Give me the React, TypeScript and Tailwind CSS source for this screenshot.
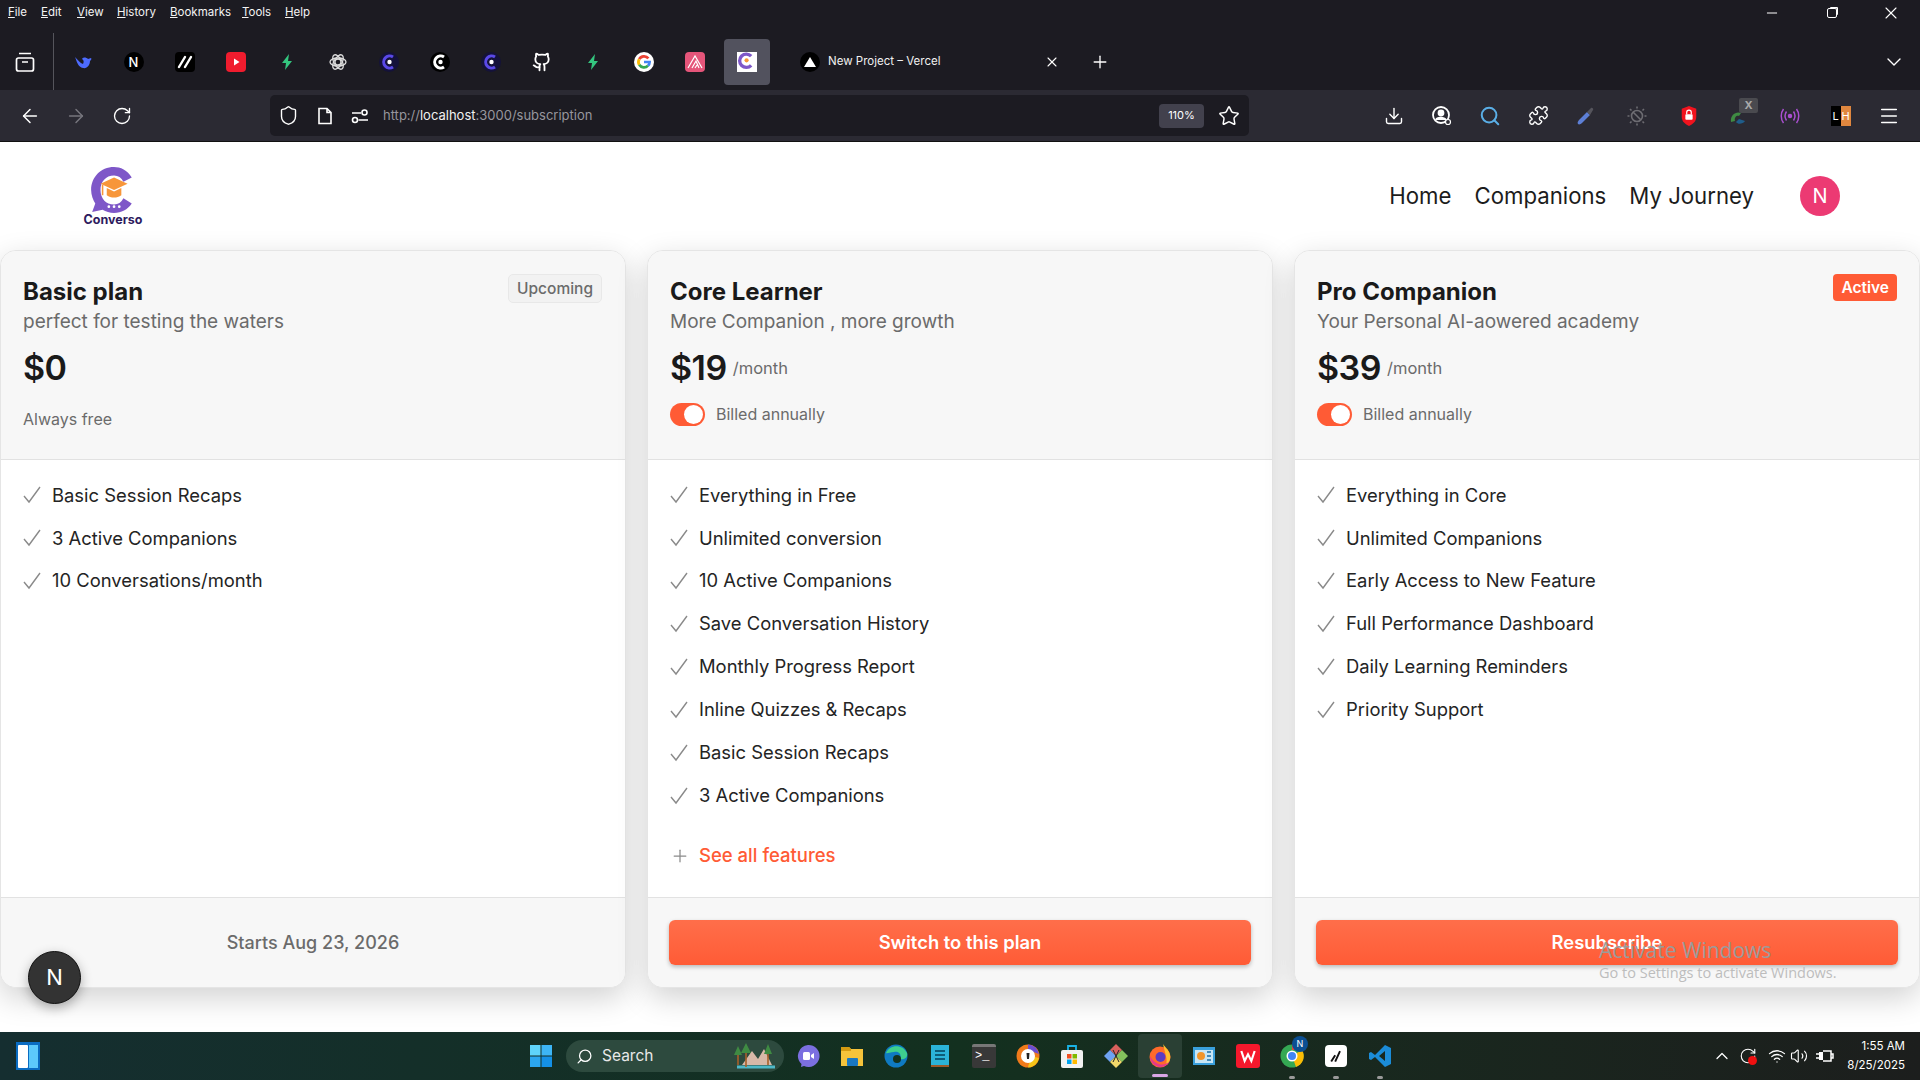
import {
  ArrowLeft,
  ArrowRight,
  ChevronDown,
  ChevronUp,
  Download,
  Github,
  Menu,
  Minus,
  Plus,
  Puzzle,
  RotateCw,
  Search,
  Shield,
  Star,
  Volume2,
  Wifi,
  X,
} from "lucide-react";
import type { ReactNode } from "react";

const menuItems = [
  ["F", "ile", "w-[33px]"],
  ["E", "dit", "w-[36px]"],
  ["V", "iew", "w-[40px]"],
  ["H", "istory", "w-[53px]"],
  ["B", "ookmarks", "w-[72px]"],
  ["T", "ools", "w-[43px]"],
  ["H", "elp", "w-[30px]"],
];

function Tile({ bg, children }: { bg: string; children?: ReactNode }) {
  return (
    <div className={`size-5 rounded-[4px] flex items-center justify-center overflow-hidden ${bg}`}>
      {children}
    </div>
  );
}

function Bolt() {
  return (
    <svg viewBox="0 0 20 20" className="size-5">
      <path d="M12 2 5 11h4l-1 7 7-9h-4z" fill="#34c67f" />
    </svg>
  );
}

function CRound({ bg, ring }: { bg: string; ring: string }) {
  return (
    <div className={`size-5 rounded-full flex items-center justify-center ${bg}`}>
      <svg viewBox="0 0 20 20" className="size-5">
        <path d="M14 5a6 6 0 1 0 0 10" fill="none" stroke={ring} strokeWidth="3" />
        <circle cx="10.5" cy="10" r="2.2" fill="#fff" />
      </svg>
    </div>
  );
}

function LogoSmall() {
  return (
    <svg viewBox="0 0 24 24" className="size-5">
      <rect width="24" height="24" fill="#fff" />
      <path d="M17 5a8 8 0 1 0 0 11" fill="none" stroke="#7e57c8" strokeWidth="4" />
      <circle cx="11.5" cy="10" r="2.5" fill="#f7963a" />
    </svg>
  );
}

const favicons: ReactNode[] = [
  <svg key="ds" viewBox="0 0 20 20" className="size-5">
    <path d="M2 5c2 5 3 10 8 11 4 1 7-3 7-7 1-1 2-2 1-3-1 0-2 1-3 1-2-2-5-2-6 0 2 1 2 3 1 5-3-1-5-4-8-7z" fill="#4d6bfe" />
  </svg>,
  <div key="n" className="size-5 rounded-full bg-black text-white text-[13px] leading-5 text-center font-medium">N</div>,
  <Tile key="w" bg="bg-black">
    <svg viewBox="0 0 20 20" className="size-5">
      <path d="M4 15 10 5M10 15l6-10" stroke="#fff" strokeWidth="2.4" strokeLinecap="round" />
    </svg>
  </Tile>,
  <Tile key="yt" bg="bg-[#f01c2e]">
    <svg viewBox="0 0 20 20" className="size-5">
      <path d="M8 6.5v7l5.5-3.5z" fill="#fff" />
    </svg>
  </Tile>,
  <Bolt key="b1" />,
  <svg key="gpt" viewBox="0 0 20 20" className="size-5" fill="none" stroke="#ddd" strokeWidth="1.3">
    <circle cx="10" cy="10" r="3" />
    <ellipse cx="10" cy="10" rx="8" ry="4" />
    <ellipse cx="10" cy="10" rx="8" ry="4" transform="rotate(60 10 10)" />
    <ellipse cx="10" cy="10" rx="8" ry="4" transform="rotate(120 10 10)" />
  </svg>,
  <CRound key="c1" bg="bg-[#14123a]" ring="#5a49e8" />,
  <CRound key="c2" bg="bg-black" ring="#ffffff" />,
  <CRound key="c3" bg="bg-[#14123a]" ring="#5a49e8" />,
  <Github key="gh" className="size-5 text-white" strokeWidth={2.2} />,
  <Bolt key="b2" />,
  <div key="g" className="size-5 rounded-full bg-white flex items-center justify-center">
    <svg viewBox="0 0 20 20" className="size-4" fill="none" strokeWidth="3.4">
      <path d="M15.5 5.5A7 7 0 0 0 4 6.5" stroke="#ea4335" />
      <path d="M4 6.5a7 7 0 0 0 0 7" stroke="#fbbc05" />
      <path d="M4 13.500a7 7 0 0 0 11 1" stroke="#34a853" />
      <path d="M15 14.500c1.500-1.300 2-2.800 2-4.500h-7" stroke="#4285f4" />
    </svg>
  </div>,
  <Tile key="s" bg="bg-[#e5557a]">
    <svg viewBox="0 0 20 20" className="size-5" fill="none" stroke="#fff" strokeWidth="1.2">
      <path d="M3 16 10 4l7 12M7 16l4-7 3 7M10 16l2-3" />
    </svg>
  </Tile>,
];

function TitleBar() {
  return (
    <div className="h-[90px] bg-[#1c1b22] text-white relative shrink-0 flex flex-col">
      <div className="flex items-center h-[33px] pb-2 pl-[8px]">
        {menuItems.map(([first, rest, width], i) => (
          <span key={i} className={`${width} text-[11.5px] text-[#f4f4f4]`}>
            <span className="underline">{first}</span>
            {rest}
          </span>
        ))}
        <div className="ml-auto -mr-[2px] flex items-center">
          <div className="w-[60px] flex justify-center">
            <Minus className="size-4" strokeWidth={1.5} />
          </div>
          <div className="w-[60px] flex justify-center">
            <div className="size-[10px] border border-white rounded-[2px] shadow-[2px_-2px_0_-1px_#fff]" />
          </div>
          <div className="w-[60px] flex justify-center pr-[2px]">
            <X className="size-5" strokeWidth={1.3} />
          </div>
        </div>
      </div>
      <div className="flex items-center flex-1">
        <div className="w-[54px] self-stretch flex items-center justify-center border-r border-[#55555c]">
          <svg viewBox="0 0 24 24" className="size-6 -ml-[3px]" fill="none" stroke="#fff" strokeWidth="1.7">
            <rect x="3.500" y="8" width="17" height="13" rx="2" />
            <path d="M6 3.500h12M9 12h6" />
          </svg>
        </div>
        <div className="flex items-center pl-[3px]">
          {favicons.map((icon, i) => (
            <div key={i} className="w-[51px] flex items-center justify-center">
              {icon}
            </div>
          ))}
          <div className="w-[46px] h-[46px] ml-[4px] rounded-[4px] bg-[#52525e] flex items-center justify-center">
            <LogoSmall />
          </div>
        </div>
        <div className="w-[268px] ml-[30px] flex items-center">
          <div className="size-5 rounded-full bg-black flex items-center justify-center">
            <div className="w-0 h-0 border-x-[6px] border-x-transparent border-b-[10px] border-b-white" />
          </div>
          <span className="ml-[8px] text-[11.5px] text-[#f0f0f0]">New Project – Vercel</span>
          <X className="size-4 ml-auto mr-[8px]" strokeWidth={1.6} />
        </div>
        <Plus className="size-5 ml-[22px]" strokeWidth={1.6} />
        <ChevronDown className="size-6 ml-auto mr-[14px]" strokeWidth={1.4} />
      </div>
    </div>
  );
}

function ToolSlot({ children }: { children: ReactNode }) {
  return <div className="w-[48px] flex items-center justify-center relative">{children}</div>;
}

function ToolBar() {
  return (
    <div className="h-[52px] bg-[#2b2a33] text-white flex items-center shrink-0 pl-[7px] border-b border-[#111]">
      <div className="w-[46px] flex justify-center">
        <ArrowLeft className="size-[22px]" strokeWidth={1.6} />
      </div>
      <div className="w-[46px] flex justify-center">
        <ArrowRight className="size-[22px] text-[#77767e]" strokeWidth={1.6} />
      </div>
      <div className="w-[46px] flex justify-center">
        <RotateCw className="size-5" strokeWidth={1.6} />
      </div>
      <div className="ml-[125px] w-[979px] h-[41px] rounded-[5px] bg-[#1c1b22] flex items-center pl-[8px]">
        <Shield className="size-[21px]" strokeWidth={1.6} />
        <svg viewBox="0 0 20 20" className="size-5 ml-[16px]" fill="none" stroke="#fff" strokeWidth="1.6">
          <path d="M4 2.500h8l4 4v11H4zM12 2.500v4h4" />
        </svg>
        <svg viewBox="0 0 20 20" className="size-5 ml-[15px]" fill="none" stroke="#fff" strokeWidth="1.6">
          <circle cx="14.500" cy="6.500" r="2.500" />
          <circle cx="5" cy="14" r="2.500" />
          <path d="M2 7h9M8.500 14H18" />
        </svg>
        <span className="ml-[13px] text-[13px] text-[#97969d]">
          http://<span className="text-[#f0f0f0]">localhost</span>:3000/subscription
        </span>
        <div className="ml-auto w-[45px] h-[24px] rounded-[4px] bg-[#42414d] text-[11px] flex items-center justify-center">
          110%
        </div>
        <Star className="size-[22px] ml-[14px] mr-[9px]" strokeWidth={1.6} />
      </div>
      <div className="ml-[121px] flex items-center">
        <ToolSlot>
          <Download className="size-5" strokeWidth={1.7} />
        </ToolSlot>
        <ToolSlot>
          <svg viewBox="0 0 22 22" className="size-[22px]" fill="none" stroke="#fff" strokeWidth="1.8">
            <circle cx="10" cy="10" r="8" />
            <circle cx="10" cy="8" r="2.500" fill="#fff" />
            <path d="M5 15c1-3 8-3 10 0" fill="#fff" />
            <circle cx="17" cy="17" r="2.500" fill="#2b2a33" strokeWidth="1.200" />
          </svg>
        </ToolSlot>
        <ToolSlot>
          <Search className="size-[22px] text-[#5aaee6]" strokeWidth={2.2} />
        </ToolSlot>
        <ToolSlot>
          <Puzzle className="size-[21px]" strokeWidth={1.6} />
        </ToolSlot>
        <ToolSlot>
          <svg viewBox="0 0 22 22" className="size-[22px]">
            <path d="M3 19c-1-1 0-3 1-4l8-8 3 3-8 8c-1 1-3 2-4 1z" fill="#5d7fd6" />
            <path d="M12 7l4-4c1-1 3 1 2 2l-3 5z" fill="#55545c" />
          </svg>
        </ToolSlot>
        <div className="w-[53px] flex justify-center">
          <svg viewBox="0 0 22 22" className="size-[22px]" fill="none" stroke="#6d6c72" strokeWidth="1.600">
            <circle cx="11" cy="11" r="5.500" />
            <path d="M7 7l8 8M11 1.500v2M11 18.500v2M1.500 11h2M18.500 11h2M4 4l1.500 1.500M16.500 16.500 18 18M18 4l-1.500 1.500M4 18l1.500-1.500" />
          </svg>
        </div>
        <div className="w-[51px] flex justify-center">
          <svg viewBox="0 0 22 24" className="w-[20px] h-[24px]">
            <path d="M11 1l8 3v9c0 5-4 8-8 10-4-2-8-5-8-10V4z" fill="#f0131e" />
            <rect x="7" y="10" width="8" height="6" rx="1" fill="#fff" />
            <path d="M8.500 10V8a2.500 2.500 0 0 1 5 0v2" fill="none" stroke="#fff" strokeWidth="1.300" />
          </svg>
        </div>
        <div className="w-[50px] flex justify-center relative">
          <svg viewBox="0 0 22 22" className="size-[22px]">
            <path d="M3 17C2 10 8 6 13 8l-2 3c-2-1-5 1-4 5z" fill="#3f8b43" />
            <path d="M8 17c2 3 7 2 9-1l-6-2z" fill="#1f5d8b" />
          </svg>
          <span className="absolute -top-[7px] left-[25px] w-[19px] h-[15px] rounded-[2px] bg-[#4a4a4f] text-[#aaa] text-[11px] leading-[15px] text-center font-bold">
            X
          </span>
        </div>
        <div className="w-[51px] flex justify-center">
          <svg viewBox="0 0 22 22" className="size-[22px]" fill="none" stroke="#a94fcf" strokeWidth="1.500">
            <circle cx="11" cy="11" r="1.500" fill="#a94fcf" />
            <path d="M7.500 6.500c-2 3-2 6 0 9M14.500 6.500c2 3 2 6 0 9M4.500 4c-3 4-3 10 0 14M17.500 4c3 4 3 10 0 14" />
          </svg>
        </div>
        <div className="w-[51px] flex justify-center">
          <div className="w-[20px] h-[20px] flex text-[11px] leading-5 text-center">
            <span className="w-[10px] bg-black">L</span>
            <span className="w-[10px] bg-[#e0873f]">H</span>
          </div>
        </div>
        <div className="w-[46px] flex justify-center">
          <Menu className="size-[22px]" strokeWidth={1.6} />
        </div>
      </div>
    </div>
  );
}

function Logo() {
  return (
    <div className="w-[60px] flex flex-col items-center">
      <svg viewBox="0 0 48 48" className="size-[50px] -mt-[1px] -mb-[2px]">
        <path
          d="M42 12C38 5 31 2 25 2 12 2 3 12 3 24c0 5 2 10 4 13l-3 8 10-2c3 2 7 3 11 3 7 0 13-3 17-9l-8-5c-2 4-5 6-9 6-8 0-13-6-13-14S17 10 25 10c4 0 7 2 9 6z"
          fill="#7e57c8"
        />
        <path d="M25 12 38 18 25 24 12 18z" fill="#f7963a" />
        <path d="M18 22v7c4 3 10 3 14 0v-7l-7 3.500z" fill="#f7963a" />
        <path d="M14 19v10" stroke="#f7963a" strokeWidth="1.500" />
        <circle cx="20" cy="40" r="1.300" fill="#fff" />
        <circle cx="25" cy="40" r="1.300" fill="#fff" />
        <circle cx="30" cy="40" r="1.300" fill="#fff" />
      </svg>
      <span className="text-[12.500px] leading-[14px] font-bold text-[#2d1b5e]">Converso</span>
    </div>
  );
}

function Navbar() {
  return (
    <div className="h-[108px] flex items-center pl-[83px] pr-[80px] shrink-0">
      <Logo />
      <div className="ml-auto flex items-center gap-[23px] text-[22.200px] text-[#1c1c1c]">
        <span>Home</span>
        <span>Companions</span>
        <span>My Journey</span>
        <div className="ml-[23px] size-10 rounded-full bg-[#ec3a73] text-white flex items-center justify-center text-[20px]">
          N
        </div>
      </div>
    </div>
  );
}

type PlanProps = {
  name: string;
  tagline: string;
  price: string;
  badge: ReactNode;
  billed: boolean;
  features: string[];
  more?: boolean;
  footer: ReactNode;
};

function PlanCard({ name, tagline, price, badge, billed, features, more, footer }: PlanProps) {
  return (
    <div className="relative flex flex-col bg-white rounded-[16px] border border-[#e5e5e5] overflow-hidden shadow-[0_10px_30px_rgba(0,0,0,0.18)]">
      <div className="h-[209px] shrink-0 bg-[#f7f7f7] border-b border-[#e2e2e2] px-[22px] pt-[26px] relative">
        <div className="text-[24px] leading-[30px] font-bold text-[#1a1a1a]">{name}</div>
        <div className="text-[19px] leading-[28px] text-[#6b6b6b] mt-[1px]">{tagline}</div>
        <div className="flex items-center mt-[10px] h-[44px]">
          <span className="text-[34px] leading-[44px] font-semibold text-[#1a1a1a] tracking-[-0.5px]">{price}</span>
          {billed && <span className="ml-[6px] mt-[1px] text-[16.500px] text-[#6b6b6b]">/month</span>}
        </div>
        <div className="flex items-center h-[24px] mt-[12px]">
          {billed ? (
            <>
              <div className="w-[35px] h-[23px] rounded-full bg-[#ff5b35] flex items-center justify-end pr-[2px]">
                <div className="size-[19px] rounded-full bg-white" />
              </div>
              <span className="ml-[11px] text-[16px] text-[#6b6b6b]">Billed annually</span>
            </>
          ) : (
            <span className="text-[16px] text-[#6b6b6b] mt-[10px]">Always free</span>
          )}
        </div>
        {badge}
      </div>
      <div className="flex-1 px-[22px] pt-[14px]">
        {features.map((feature) => (
          <div key={feature} className="flex items-center h-[42.900px] text-[18.400px] text-[#242424]">
            <svg viewBox="0 0 18 18" className="size-[18px] shrink-0" fill="none" stroke="#8a8a8a" strokeWidth="1.400">
              <path d="M1 10l5 6L17 1" />
            </svg>
            <span className="ml-[11px]">{feature}</span>
          </div>
        ))}
        {more && (
          <div className="flex items-center mt-[26px] h-[26px] text-[18.500px] font-medium text-[#ff5b35]">
            <Plus className="size-5 text-[#8a8a8a]" strokeWidth={1.5} />
            <span className="ml-[9px]">See all features</span>
          </div>
        )}
      </div>
      <div className="h-[90px] shrink-0 bg-[#f7f7f7] border-t border-[#e2e2e2] flex items-center px-[21px]">
        {footer}
      </div>
    </div>
  );
}

function PrimaryButton({ children }: { children: ReactNode }) {
  return (
    <div className="w-full h-[45px] rounded-[6px] bg-gradient-to-b from-[#ff6e4a] to-[#ff5b35] text-white text-[18.400px] font-semibold flex items-center justify-center shadow-[0_2px_4px_rgba(0,0,0,0.25)]">
      {children}
    </div>
  );
}

const plans: PlanProps[] = [
  {
    name: "Basic plan",
    tagline: "perfect for testing the waters",
    price: "$0",
    billed: false,
    badge: (
      <span className="absolute top-[23px] right-[23px] h-[29px] px-[8px] rounded-[5px] border border-[#e8e8e8] bg-[#f2f2f2] text-[15.500px] font-medium leading-[27px] text-[#6b6b6b]">
        Upcoming
      </span>
    ),
    features: ["Basic Session Recaps", "3 Active Companions", "10 Conversations/month"],
    footer: <div className="w-full text-center text-[18px] font-medium text-[#6b6b6b]">Starts Aug 23, 2026</div>,
  },
  {
    name: "Core Learner",
    tagline: "More Companion , more growth",
    price: "$19",
    billed: true,
    badge: null,
    features: [
      "Everything in Free",
      "Unlimited conversion",
      "10 Active Companions",
      "Save Conversation History",
      "Monthly Progress Report",
      "Inline Quizzes & Recaps",
      "Basic Session Recaps",
      "3 Active Companions",
    ],
    more: true,
    footer: <PrimaryButton>Switch to this plan</PrimaryButton>,
  },
  {
    name: "Pro Companion",
    tagline: "Your Personal AI-aowered academy",
    price: "$39",
    billed: true,
    badge: (
      <span className="absolute top-[23px] right-[22px] h-[27px] px-[8px] rounded-[4px] bg-[#ff5b35] text-[15.500px] font-semibold leading-[27px] text-white">
        Active
      </span>
    ),
    features: [
      "Everything in Core",
      "Unlimited Companions",
      "Early Access to New Feature",
      "Full Performance Dashboard",
      "Daily Learning Reminders",
      "Priority Support",
    ],
    footer: <PrimaryButton>Resubscribe</PrimaryButton>,
  },
];

const taskbarIcons: ReactNode[] = [
  <svg key="meet" viewBox="0 0 24 24" className="size-6">
    <path d="M12 1a11 11 0 1 1-4 21l-3 1 .5-3A11 11 0 0 1 12 1z" fill="#7b6fe0" />
    <rect x="7" y="8" width="7" height="8" rx="1.500" fill="#fff" />
    <path d="M15 11l3-2v6l-3-2z" fill="#fff" />
  </svg>,
  <svg key="files" viewBox="0 0 24 24" className="size-6">
    <path d="M1 3h8l2 2h12v17H1z" fill="#f5c33b" />
    <path d="M1 3h8l2 2v2H1z" fill="#d59b12" />
    <rect x="7" y="14" width="11" height="8" rx="1" fill="#1a78c2" />
  </svg>,
  <svg key="edge" viewBox="0 0 24 24" className="size-6">
    <circle cx="12" cy="12" r="11.500" fill="#0f7ac2" />
    <path d="M2 9C5 1 18-1 23 9c1 5-3 7-7 6 2-4-1-8-6-7-4 0-7 2-8 1z" fill="#3ecf8e" />
    <circle cx="13" cy="15" r="4" fill="#14331f" />
  </svg>,
  <svg key="notes" viewBox="0 0 24 24" className="size-6">
    <rect x="3" y="1" width="18" height="22" fill="#2bb3d8" />
    <rect x="3" y="21" width="18" height="2" fill="#9c5a2a" />
    <path d="M7 7h10M7 11h10M7 15h10" stroke="#0d5c78" strokeWidth="1.800" />
  </svg>,
  <div key="term" className="w-6 h-[24px] rounded-[2px] bg-[#383838] border-t-[3px] border-[#777] text-white text-[12px] leading-[18px] font-mono pl-[3px]">
    {">_"}
  </div>,
  <svg key="brave" viewBox="0 0 24 24" className="size-6">
    <circle cx="12" cy="12" r="11.500" fill="#f07a1a" />
    <path d="M12 .5A11.500 11.500 0 0 1 23 10L12 6z" fill="#6b4fd0" />
    <path d="M12 23.500A11.500 11.500 0 0 0 23 14l-8-2z" fill="#f5c518" />
    <circle cx="12" cy="12" r="7" fill="#fff" />
    <path d="M10.500 9h3l-.5 6h-2z" fill="#222" />
  </svg>,
  <svg key="store" viewBox="0 0 24 24" className="size-6">
    <path d="M8 6V2h8v4" fill="none" stroke="#19b3e6" strokeWidth="1.800" />
    <rect x="1" y="6" width="22" height="18" rx="2" fill="#f2f2f2" />
    <rect x="7" y="10" width="4.500" height="4.500" fill="#f25022" />
    <rect x="12.500" y="10" width="4.500" height="4.500" fill="#7fba00" />
    <rect x="7" y="15.500" width="4.500" height="4.500" fill="#00a4ef" />
    <rect x="12.500" y="15.500" width="4.500" height="4.500" fill="#ffb900" />
  </svg>,
  <svg key="kite" viewBox="0 0 24 24" className="size-6">
    <path d="M12 0l6 6-6 6-6-6z" fill="#d9605c" />
    <path d="M0 12l6-6 6 6-6 6z" fill="#6ea2f2" />
    <path d="M24 12l-6-6-6 6 6 6z" fill="#83c15d" />
    <path d="M12 24l6-6-6-6-6 6z" fill="#f1d86a" />
    <path d="M9 6l6 12M15 6 9 18" stroke="#222" strokeWidth="1" />
  </svg>,
  <svg key="fx" viewBox="0 0 24 24" className="size-6">
    <circle cx="12" cy="13" r="10.500" fill="#ff6a2b" />
    <path d="M15 0c2 3 6 6 7 11 1 4-1 8-4 10 2-5-1-12-3-21z" fill="#ffbd2e" />
    <path d="M2 12A10.500 10.500 0 0 0 22 17c-4 5-14 6-20-5z" fill="#e5388a" />
    <circle cx="12.500" cy="13" r="5" fill="#5b3bc4" />
  </svg>,
  <svg key="tm" viewBox="0 0 24 24" className="size-6">
    <rect x="1" y="3" width="22" height="18" fill="#3aa0dc" />
    <rect x="3" y="6" width="18" height="13" fill="#c8e6f5" />
    <circle cx="9" cy="12" r="4" fill="#f2952b" />
    <path d="M15 8h4M15 12h4M15 16h4" stroke="#1a6fa8" strokeWidth="1.600" />
  </svg>,
  <div key="wps" className="size-6 rounded-[3px] bg-[#f5182c] flex items-center justify-center">
    <svg viewBox="0 0 24 24" className="size-5" fill="none" stroke="#fff" strokeWidth="2.600">
      <path d="M4 6l4 12 4-8 4 8 4-12" />
    </svg>
  </div>,
  <div key="chrome" className="relative size-6">
    <svg viewBox="0 0 24 24" className="size-6">
      <circle cx="12" cy="12" r="11.500" fill="#34a853" />
      <path d="M12 .5A11.500 11.500 0 0 1 22 6H12z" fill="#ea4335" />
      <path d="M22 6a11.500 11.500 0 0 1-6 17l-4-11z" fill="#fbbc05" />
      <circle cx="12" cy="12" r="5.500" fill="#fff" />
      <circle cx="12" cy="12" r="4" fill="#4285f4" />
    </svg>
    <span className="absolute -top-[8px] left-[12px] size-4 rounded-full bg-[#0b4f92] text-white text-[9px] leading-4 text-center">N</span>
  </div>,
  <div key="app" className="size-[22px] rounded-[4px] bg-white flex items-center justify-center">
    <svg viewBox="0 0 20 20" className="size-4" fill="none" stroke="#111" strokeWidth="2.400">
      <path d="M4 17 9 9M9 17l6-13" />
    </svg>
  </div>,
  <svg key="code" viewBox="0 0 24 24" className="size-6">
    <path d="M17 1 23 4v16l-6 3L7 13l-4 3-2-1V9l2-1 4 3zM17 7l-6 5 6 5z" fill="#1b8cd8" />
  </svg>,
];

function Taskbar() {
  return (
    <div className="h-[48px] shrink-0 flex items-center bg-gradient-to-r from-[#152e30] via-[#13301f] to-[#1c1e1d] text-white">
      <div className="ml-[16px] w-[24px] h-[28px] bg-[#0a6cc2] flex items-center px-[2px] gap-[1px]">
        <div className="w-[10px] h-[23px] bg-white rounded-[1px]" />
        <div className="w-[9px] h-[23px] bg-[#5cc9fb]" />
      </div>
      <svg viewBox="0 0 24 24" className="ml-[489px] size-[24px]">
        <rect x="1" y="1" width="10.500" height="10.500" fill="#5fd4fb" />
        <rect x="12.500" y="1" width="10.500" height="10.500" fill="#3db5f5" />
        <rect x="1" y="12.500" width="10.500" height="10.500" fill="#2ba6ef" />
        <rect x="12.500" y="12.500" width="10.500" height="10.500" fill="#1490e6" />
      </svg>
      <div className="ml-[13px] w-[218px] h-[32px] rounded-full bg-[#2d4a3e] flex items-center pl-[10px] relative">
        <Search className="size-[17px] -scale-x-100" strokeWidth={1.800} />
        <span className="ml-[9px] text-[15.500px] text-[#e8e8e8]">Search</span>
        <svg viewBox="0 0 48 30" className="absolute right-[4px] top-[1px] w-[48px] h-[30px]">
          <path d="M10 24 20 10l6 8 6-10 8 16z" fill="#d8b8a8" />
          <path d="M5 26h38" stroke="#4fb8c8" strokeWidth="3" />
          <path d="M6 24V8M14 26V4M36 24V6" stroke="#a8602a" strokeWidth="1.600" />
          <path d="M6 5 2 14h8zM14 2 9 12h10zM36 3 32 13h8z" fill="#3f8b43" />
        </svg>
      </div>
      <div className="ml-[2px] flex items-center">
        {taskbarIcons.map((icon, i) => (
          <div key={i} className={`w-[44px] h-[44px] flex items-center justify-center relative ${i === 8 ? "rounded-[4px] bg-[#2a4034]" : ""}`}>
            {icon}
            {i === 8 && <div className="absolute bottom-[1px] w-[16px] h-[3px] rounded-full bg-[#d9a6e6]" />}
            {i > 10 && <div className="absolute -bottom-[1px] w-[6px] h-[3px] rounded-full bg-[#9a9a9a]" />}
          </div>
        ))}
      </div>
      <div className="ml-auto flex items-center pr-[15px]">
        <ChevronUp className="size-5" strokeWidth={1.500} />
        <div className="relative ml-[7px] size-[18px]">
          <RotateCw className="size-[18px]" strokeWidth={1.500} />
          <div className="absolute bottom-0 right-0 size-[9px] rounded-full bg-[#f01010]" />
        </div>
        <Wifi className="size-[18px] ml-[11px]" strokeWidth={1.700} />
        <Volume2 className="size-[18px] ml-[4px]" strokeWidth={1.500} />
        <svg viewBox="0 0 20 20" className="size-5 ml-[6px]" fill="none" stroke="#fff" strokeWidth="1.500">
          <path d="M9 5h8v10H9M17 8h2v4h-2M2 8h4M2 12h4" />
          <rect x="5" y="6" width="4" height="8" fill="#fff" stroke="none" />
        </svg>
        <div className="ml-[13px] text-right text-[11.500px] leading-[19px]">
          <div>1:55 AM</div>
          <div>8/25/2025</div>
        </div>
      </div>
    </div>
  );
}

export default function App() {
  return (
    <div className="w-[1920px] h-[1080px] relative overflow-hidden flex flex-col bg-white font-['Inter',sans-serif]">
      <TitleBar />
      <ToolBar />
      <div className="flex-1 flex flex-col min-h-0">
        <Navbar />
        <div className="flex-1 min-h-0 grid grid-cols-3 gap-[21px] pb-[44px]">
          {plans.map((plan) => (
            <PlanCard key={plan.name} {...plan} />
          ))}
        </div>
      </div>
      <Taskbar />
      <div className="absolute left-[28px] top-[951px] size-[53px] rounded-full bg-[#333] border border-[#111] text-white text-[22px] flex items-center justify-center shadow-[0_4px_12px_rgba(0,0,0,0.3)]">
        N
      </div>
      <div className="absolute left-[1599px] top-[936px] font-['Open_Sans',sans-serif] text-[#9b9b9b] pointer-events-none">
        <div className="text-[21px] leading-[28px]">Activate Windows</div>
        <div className="text-[14.500px] leading-[20px] mt-[-1px] text-[#bdbdbd]">Go to Settings to activate Windows.</div>
      </div>
    </div>
  );
}
